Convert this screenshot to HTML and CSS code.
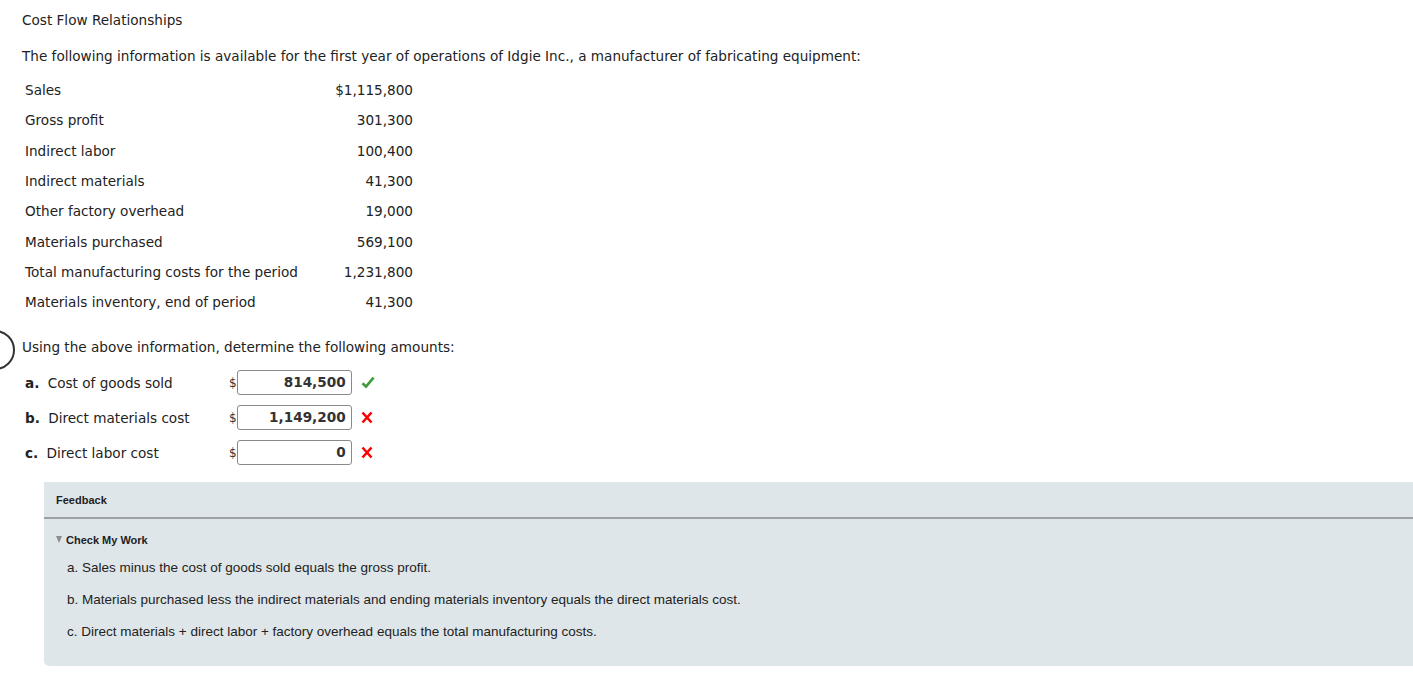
FILE: index.html
```html
<!DOCTYPE html>
<html lang="en">
<head>
    <meta charset="UTF-8">
    <title>Cost Flow Relationships</title>
    <link rel="stylesheet" href="styles.css">
</head>
<body>
    <div class="page">
        <p class="title">Cost Flow Relationships</p>
        <p class="intro">The following information is available for the first year of operations of Idgie Inc., a manufacturer of fabricating equipment:</p>
        <table class="data">
            <tr><td>Sales</td><td class="num">$1,115,800</td></tr>
            <tr><td>Gross profit</td><td class="num">301,300</td></tr>
            <tr><td>Indirect labor</td><td class="num">100,400</td></tr>
            <tr><td>Indirect materials</td><td class="num">41,300</td></tr>
            <tr><td>Other factory overhead</td><td class="num">19,000</td></tr>
            <tr><td>Materials purchased</td><td class="num">569,100</td></tr>
            <tr><td>Total manufacturing costs for the period</td><td class="num">1,231,800</td></tr>
            <tr><td>Materials inventory, end of period</td><td class="num">41,300</td></tr>
        </table>
        <div class="question">
            <span class="marker"></span>
            <p class="prompt">Using the above information, determine the following amounts:</p>
            <table class="answers">
                <tr>
                    <td class="label"><b>a.</b> Cost of goods sold</td>
                    <td class="cur">$</td>
                    <td><span class="box">814,500</span></td>
                    <td class="mark ok"><svg width="14" height="13" viewBox="0 0 14 13"><path d="M1.5 7.2 L5 10.6 L12.6 1.6" fill="none" stroke="#3d9b3d" stroke-width="2.6"/></svg></td>
                </tr>
                <tr>
                    <td class="label"><b>b.</b> Direct materials cost</td>
                    <td class="cur">$</td>
                    <td><span class="box">1,149,200</span></td>
                    <td class="mark bad"><svg width="12" height="13" viewBox="0 0 12 13"><path d="M1.5 1.5 L10.5 11.5 M10.5 1.5 L1.5 11.5" stroke="#f00" stroke-width="2.6"/></svg></td>
                </tr>
                <tr>
                    <td class="label"><b>c.</b> Direct labor cost</td>
                    <td class="cur">$</td>
                    <td><span class="box">0</span></td>
                    <td class="mark bad"><svg width="12" height="13" viewBox="0 0 12 13"><path d="M1.5 1.5 L10.5 11.5 M10.5 1.5 L1.5 11.5" stroke="#f00" stroke-width="2.6"/></svg></td>
                </tr>
            </table>
        </div>
        <div class="feedback">
            <div class="fb-head">Feedback</div>
            <div class="fb-body">
                <div class="check"><span class="arrow"></span>Check My Work</div>
                <p>a. Sales minus the cost of goods sold equals the gross profit.</p>
                <p>b. Materials purchased less the indirect materials and ending materials inventory equals the direct materials cost.</p>
                <p>c. Direct materials + direct labor + factory overhead equals the total manufacturing costs.</p>
            </div>
        </div>
    </div>
</body>
</html>
```

FILE: styles.css
```css
body {
    margin: 0;
    padding: 0;
    background: #fff;
    color: #222;
    font-family: "DejaVu Sans", Verdana, sans-serif;
    font-size: 13.6px;
    overflow-x: hidden;
}
.page {
    padding: 12px 0 0 22px;
}
.title {
    margin: 0 0 20px;
}
.intro {
    margin: 0 0 11px;
}
.data {
    border-collapse: collapse;
    margin-left: 1px;
    width: 392px;
}
.data td {
    height: 30.3px;
    padding: 0 2px;
    vertical-align: middle;
}
.data td.num {
    text-align: right;
}
.question {
    position: relative;
    margin-top: 22px;
}
.marker {
    position: absolute;
    left: -47px;
    top: -9px;
    width: 36px;
    height: 36px;
    border: 2.5px solid #333;
    border-radius: 50%;
}
.prompt {
    margin: 0 0 10px;
}
.answers {
    border-collapse: collapse;
    margin-left: 1px;
}
.answers td {
    height: 35px;
    padding: 0;
    vertical-align: middle;
}
.answers .label {
    width: 204px;
    padding-left: 2px;
}
.answers .label b {
    margin-right: 4px;
}
.answers .cur {
    width: 7px;
    font-size: 12px;
    color: #333;
}
.box {
    display: block;
    box-sizing: border-box;
    width: 115px;
    height: 25px;
    line-height: 23px;
    border: 1px solid #8a8a8a;
    border-radius: 3px;
    text-align: right;
    padding-right: 5px;
    font-weight: bold;
    color: #333;
    font-size: 13.6px;
}
.answers .mark {
    padding-left: 9px;
    line-height: 0;
}
.feedback {
    margin: 12px -20px 0 22px;
    background: #dfe6e9;
    border-radius: 0 0 0 5px;
    font-family: "Liberation Sans", Arial, sans-serif;
    color: #222;
    padding-bottom: 27px;
}
.fb-head {
    font-size: 11px;
    font-weight: bold;
    padding: 12px 12px 11px;
    border-bottom: 2px solid #9ba1a4;
}
.fb-body {
    padding: 15px 0 0 12px;
}
.check {
    font-size: 11px;
    font-weight: bold;
}
.arrow {
    display: inline-block;
    width: 0;
    height: 0;
    border-left: 3.5px solid transparent;
    border-right: 3.5px solid transparent;
    border-top: 7px solid #8c8c8c;
    margin-right: 4px;
    vertical-align: 1px;
}
.fb-body p {
    margin: 14px 0 0 11px;
    font-size: 13.5px;
}
.fb-body p + p {
    margin-top: 17px;
}
```
